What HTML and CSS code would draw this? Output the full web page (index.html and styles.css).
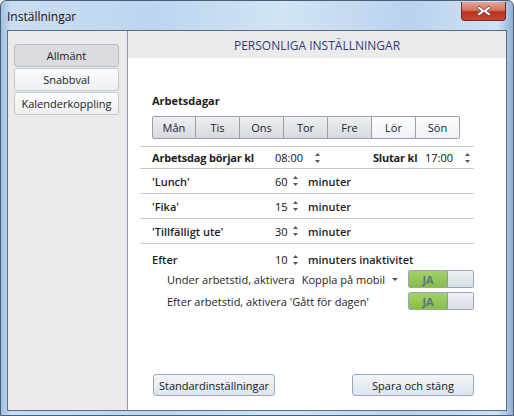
FILE: index.html
```html
<!DOCTYPE html>
<html>
<head>
<meta charset="utf-8">
<link rel="stylesheet" href="styles.css">
</head>
<body>
<div class="window">
  <div class="titlebar">
    <span class="title">Inställningar</span>
    <div class="close">
      <svg width="16" height="12" viewBox="0 0 16 12"><path d="M3 1 L8 5 L13 1 L15 3 L11 6 L15 9 L13 11 L8 7 L3 11 L1 9 L5 6 L1 3 Z" fill="#fff" stroke="#6a3a3a" stroke-width="0.8"/></svg>
    </div>
  </div>
  <div class="client">
    <div class="nav">
      <div class="navbtn active">Allmänt</div>
      <div class="navbtn">Snabbval</div>
      <div class="navbtn">Kalenderkoppling</div>
    </div>
    <div class="pane">
      <div class="header">PERSONLIGA INSTÄLLNINGAR</div>
      <div class="content">
        <div class="section-title">Arbetsdagar</div>
        <div class="days">
          <div class="day on">Mån</div>
          <div class="day on">Tis</div>
          <div class="day on">Ons</div>
          <div class="day on">Tor</div>
          <div class="day on">Fre</div>
          <div class="day">Lör</div>
          <div class="day">Sön</div>
        </div>
        <div class="rows">
          <div class="row first">
            <span class="label bold">Arbetsdag börjar kl</span>
            <span class="val time">08:00</span>
            <span class="spin wide"><svg width="7" height="14" viewBox="0 0 7 14"><path d="M3.5 2 L6 5 L1 5 Z M1 9 L6 9 L3.5 12 Z" fill="#555"/></svg></span>
            <span class="label bold slut">Slutar kl</span>
            <span class="val time">17:00</span>
            <span class="spin wide"><svg width="7" height="14" viewBox="0 0 7 14"><path d="M3.5 2 L6 5 L1 5 Z M1 9 L6 9 L3.5 12 Z" fill="#555"/></svg></span>
          </div>
          <div class="row">
            <span class="label">'Lunch'</span>
            <span class="val">60</span>
            <span class="spin"><svg width="7" height="14" viewBox="0 0 7 14"><path d="M3.5 2 L6 5 L1 5 Z M1 9 L6 9 L3.5 12 Z" fill="#555"/></svg></span>
            <span class="unit">minuter</span>
          </div>
          <div class="row">
            <span class="label">'Fika'</span>
            <span class="val">15</span>
            <span class="spin"><svg width="7" height="14" viewBox="0 0 7 14"><path d="M3.5 2 L6 5 L1 5 Z M1 9 L6 9 L3.5 12 Z" fill="#555"/></svg></span>
            <span class="unit">minuter</span>
          </div>
          <div class="row">
            <span class="label">'Tillfälligt ute'</span>
            <span class="val">30</span>
            <span class="spin"><svg width="7" height="14" viewBox="0 0 7 14"><path d="M3.5 2 L6 5 L1 5 Z M1 9 L6 9 L3.5 12 Z" fill="#555"/></svg></span>
            <span class="unit">minuter</span>
          </div>
          <div class="row last">
            <span class="label">Efter</span>
            <span class="val">10</span>
            <span class="spin"><svg width="7" height="14" viewBox="0 0 7 14"><path d="M3.5 2 L6 5 L1 5 Z M1 9 L6 9 L3.5 12 Z" fill="#555"/></svg></span>
            <span class="unit">minuters inaktivitet</span>
          </div>
        </div>
        <div class="sub">
          <div class="subrow">
            <span class="sublabel">Under arbetstid, aktivera</span>
            <span class="select">Koppla på mobil <span class="caret"></span></span>
            <div class="toggle"><span class="ja">JA</span><span class="off"></span></div>
          </div>
          <div class="subrow">
            <span class="sublabel">Efter arbetstid, aktivera 'Gått för dagen'</span>
            <div class="toggle"><span class="ja">JA</span><span class="off"></span></div>
          </div>
        </div>
        <div class="buttons">
          <div class="btn">Standardinställningar</div>
          <div class="btn">Spara och stäng</div>
        </div>
      </div>
    </div>
  </div>
</div>
</body>
</html>
```
FILE: styles.css
```css
html, body {
  margin: 0;
  padding: 0;
}
body {
  width: 514px;
  height: 416px;
  overflow: hidden;
  font-family: "Open Sans", "Noto Sans", sans-serif;
  font-size: 11px;
  color: #1e1e1e;
}
.window {
  width: 514px;
  height: 416px;
  box-sizing: border-box;
  background: linear-gradient(90deg, #9fc0e2 0%, #c9def3 2%, #bcd6f0 30%, #d2e4f6 55%, #b9d3ee 80%, #cfe2f5 97%, #8fb0d4 100%);
  display: flex;
  flex-direction: column;
  border: 1px solid #4c5f78;
  border-radius: 6px 6px 0 0;
}
.titlebar {
  height: 29px;
  display: flex;
  align-items: flex-start;
  justify-content: space-between;
  padding: 0 7px 0 6px;
}
.title {
  font-family: "Open Sans", sans-serif;
  font-size: 12px;
  color: #111;
  margin-top: 7px;
}
.close {
  width: 45px;
  height: 19px;
  margin-top: 1px;
  box-sizing: border-box;
  border: 1px solid #6b2b24;
  border-top: none;
  border-radius: 0 0 4px 4px;
  background: linear-gradient(180deg, #e8a496 0%, #d2735f 45%, #b8321e 55%, #c9462e 100%);
  display: flex;
  align-items: center;
  justify-content: center;
}
.client {
  flex: 1;
  margin: 0 6px 4px 6px;
  border: 1px solid #5d6b7c;
  display: flex;
  background: #fff;
}
.nav {
  flex: 0 0 120px;
  width: 120px;
  background: #ebebeb;
  border-right: 1px solid #8e9aaa;
  padding: 13px 8px 0 6px;
  display: flex;
  flex-direction: column;
  gap: 1px;
  box-sizing: border-box;
}
.navbtn {
  height: 21px;
  border: 1px solid #c3c8cf;
  border-radius: 3px;
  background: linear-gradient(180deg, #fbfcfd, #eef0f3);
  display: flex;
  align-items: center;
  justify-content: center;
  color: #222;
  font-size: 11px;
}
.navbtn.active {
  background: #dadcdf;
  border-color: #b9bec5;
}
.pane {
  flex: 1;
  min-width: 0;
  display: flex;
  flex-direction: column;
}
.header {
  height: 27px;
  background: #ebebeb;
  display: flex;
  align-items: center;
  justify-content: center;
  color: #2f3b78;
  font-size: 12px;
  padding-top: 1px;
  box-sizing: border-box;
}
.content {
  flex: 1;
  padding: 0 32px 0 12px;
  display: flex;
  flex-direction: column;
}
.section-title {
  font-weight: 700;
  margin: 35px 0 0 12px;
  font-size: 11px;
  line-height: 15px;
}
.days {
  display: flex;
  margin: 8px 0 0 12px;
}
.day {
  width: 44px;
  height: 23px;
  box-sizing: border-box;
  border: 1px solid #98a1ac;
  border-left: none;
  background: linear-gradient(180deg, #fdfdfe, #eef0f3);
  display: flex;
  align-items: center;
  justify-content: center;
  color: #1a2230;
  font-size: 11px;
}
.day:first-child {
  border-left: 1px solid #98a1ac;
  border-radius: 2px 0 0 2px;
}
.day:last-child {
  border-radius: 0 2px 2px 0;
}
.day.on {
  background: linear-gradient(180deg, #eef0f2, #d6dade);
}
.rows {
  margin-top: 7px;
  border-top: 1px solid #c8c8c8;
}
.row {
  height: 25px;
  box-sizing: border-box;
  border-bottom: 1px solid #c8c8c8;
  display: flex;
  align-items: center;
  padding-left: 12px;
  font-weight: 600;
}
.row.first {
  height: 22px;
}
.row.last {
  border-bottom: none;
  height: 24px;
  align-items: flex-end;
  padding-bottom: 1px;
}
.label {
  width: 123px;
  color: #1e1e1e;
}
.label.bold {
  font-weight: 700;
  letter-spacing: -0.2px;
}
.val {
  font-weight: 400;
  width: 17px;
  color: #111;
}
.val.time {
  width: 39px;
}
.spin {
  display: flex;
  width: 16px;
  height: 14px;
  align-items: center;
}
.spin.wide {
  width: 7px;
}
.slut {
  margin-left: 52px;
  width: 52px;
}
.sub {
  padding-left: 27px;
  display: flex;
  flex-direction: column;
  gap: 4px;
  margin-top: 2px;
}
.subrow {
  height: 18px;
  display: flex;
  align-items: center;
}
.select {
  margin-left: 7px;
  display: flex;
  align-items: center;
}
.caret {
  display: inline-block;
  width: 0;
  height: 0;
  border-left: 3px solid transparent;
  border-right: 3px solid transparent;
  border-top: 3px solid #555;
  margin-left: 7px;
}
.toggle {
  margin-left: auto;
  width: 66px;
  height: 18px;
  box-sizing: border-box;
  border: 1px solid #9aa6b6;
  border-radius: 2px;
  display: flex;
  overflow: hidden;
}
.ja {
  width: 38px;
  background: linear-gradient(180deg, #a4d26a, #86bd48);
  color: #5e7282;
  font-weight: 700;
  display: flex;
  align-items: center;
  justify-content: center;
  border-right: 1px solid #8b9aab;
}
.off {
  flex: 1;
  background: linear-gradient(180deg, #eef1f5, #d8dee6);
}
.buttons {
  margin-top: auto;
  margin-bottom: 14px;
  display: flex;
  justify-content: space-between;
  padding-left: 13px;
}
.btn {
  height: 22px;
  width: 122px;
  box-sizing: border-box;
  border: 1px solid #9ba9bb;
  border-radius: 3px;
  background: linear-gradient(180deg, #f3f6fa, #dde5ef);
  display: flex;
  align-items: center;
  justify-content: center;
  color: #1a1a1a;
}
```
